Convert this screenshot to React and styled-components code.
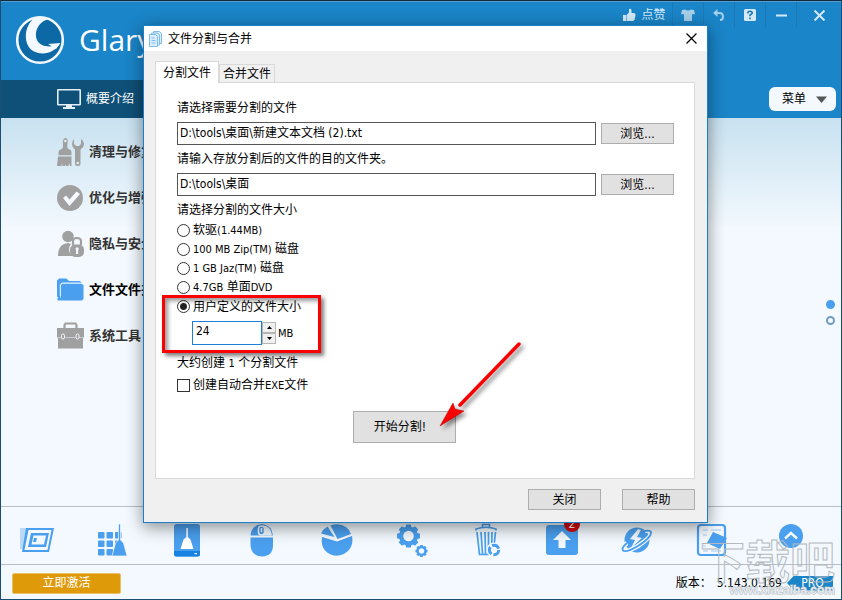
import { useState } from 'react'
import styled, { createGlobalStyle, css } from 'styled-components'

const GlobalStyle = createGlobalStyle`
  *, *::before, *::after {
    box-sizing: border-box;
  }

  body {
    margin: 0;
    color: #000;
    background: #f3f9fe;
    font-family: 'DejaVu Sans Condensed', 'Noto Sans CJK SC', sans-serif;
    font-size: 12px;
    line-height: 18px;
  }

  button, input {
    margin: 0;
    padding: 0;
    border: 0;
    color: inherit;
    font: inherit;
  }

  svg {
    display: block;
    flex: none;
  }
`

const Window = styled.div`
  position: relative;
  display: flex;
  flex-direction: column;
  min-height: 100vh;
  overflow: hidden;
  border: 1px solid #1c4e73;
  border-top-color: #0c2a40;
  background: #f3f9fe;
`

const Header = styled.header`
  display: flex;
  justify-content: space-between;
  align-items: flex-start;
  height: 79px;
  padding-left: 14px;
  background: #1a85c8;
  border-top: 1px solid #5a9dc8;
`

const Brand = styled.div`
  display: flex;
  align-items: center;
  gap: 14px;
  height: 76px;
  color: #fff;
  white-space: nowrap;
`

const BrandName = styled.span`
  font-family: 'Open Sans', 'Noto Sans', sans-serif;
  font-size: 30px;
  line-height: 40px;
`

const Controls = styled.div`
  display: flex;
  height: 26px;
  color: #d3e9f7;
`

const Control = styled.button`
  display: flex;
  align-items: center;
  justify-content: center;
  gap: 5px;
  width: ${props => props.$width || 31}px;
  background: none;
  border-right: 1px solid #1a78b5;

  &:last-child {
    border-right: 0;
  }
`

const NavBar = styled.nav`
  display: flex;
  justify-content: space-between;
  align-items: center;
  height: 38px;
  padding-right: 5px;
  background: #1a85c8;
`

const NavTab = styled.a`
  display: flex;
  align-items: center;
  gap: 4px;
  width: 50%;
  height: 38px;
  padding-left: 55px;
  color: #fff;
  background: #0f5078;
  text-decoration: none;
`

const MenuButton = styled.button`
  display: flex;
  align-items: center;
  justify-content: space-between;
  width: 67px;
  height: 24px;
  padding: 0 9px 0 13px;
  border-radius: 6px;
  background: #f3f9fe;
`

const Content = styled.main`
  display: flex;
  flex: 1;
  justify-content: space-between;
  align-items: flex-start;
  padding: 11px 6px 11px 55px;
  background: linear-gradient(#c8e1f0, #f3f9fe 110px);
`

const SideLink = styled.a`
  display: flex;
  align-items: center;
  gap: 5px;
  height: 46px;
  color: ${props => props.$active ? '#000' : '#333'};
  font-size: 13px;
  font-weight: 700;
  text-decoration: none;
  white-space: nowrap;
`

const Pager = styled.div`
  display: flex;
  flex-direction: column;
  gap: 7px;
  align-self: center;
`

const PageDot = styled.button`
  width: 9px;
  height: 9px;
  border: 2px solid ${props => props.$active ? '#4a9fee' : '#6f9cc0'};
  border-radius: 50%;
  background: ${props => props.$active ? '#4a9fee' : '#f3f9fe'};
`

const Toolbar = styled.div`
  display: flex;
  justify-content: space-between;
  align-items: center;
  height: 58px;
  padding: 0 38px 0 19px;
  border-top: 1px solid #b6bfc8;
`

const Tools = styled.div`
  display: flex;
  flex: 1;
  justify-content: space-between;
  margin-right: 50px;
  padding-top: 8px;
`

const ToolButton = styled.button`
  position: relative;
  display: flex;
  background: none;
`

const Badge = styled.span`
  position: absolute;
  top: -7px;
  right: -1px;
  width: 16px;
  height: 16px;
  border-radius: 50%;
  color: #fff;
  background: #d40b0b;
  line-height: 16px;
`

const Footer = styled.footer`
  display: flex;
  align-items: center;
  justify-content: space-between;
  height: 35px;
  padding: 2px 8px 0 11px;
  border-top: 1px solid #b6bfc8;
`

const ActivateButton = styled.button`
  width: 109px;
  height: 21px;
  border: 1px solid #eac068;
  border-radius: 2px;
  color: #fff;
  background: #df9a0a;
`

const Version = styled.div`
  display: flex;
  align-items: center;
  gap: 5px;
`

const Pro = styled.span`
  width: 46px;
  height: 15px;
  padding-left: 5px;
  color: #fff;
  background: #1a85c8;
  clip-path: polygon(0 50%, 7px 0, 100% 0, 100% 100%, 7px 100%);
  line-height: 15px;
  text-align: center;
`

const Watermark = styled.div`
  position: absolute;
  right: 6px;
  bottom: 2px;
  color: transparent;
  font-size: 45px;
  font-weight: 700;
  line-height: 52px;
  text-align: right;
  pointer-events: none;
  -webkit-text-stroke: 1px #b4babf;
`

const WatermarkUrl = styled.div`
  margin-top: -6px;
  color: #e6eaee;
  font-family: 'Liberation Sans', sans-serif;
  font-size: 12px;
  line-height: 13px;
  -webkit-text-stroke: 1px #b3b9bf;
  paint-order: stroke fill;
`

const DialogBox = styled.section`
  position: absolute;
  top: 24px;
  right: 133px;
  left: 142px;
  border: 1px solid #1a7fc8;
  background: #f0f0f0;
  box-shadow: 0 4px 16px rgba(0, 0, 0, .45);
`

const TitleBar = styled.header`
  display: flex;
  align-items: center;
  gap: 6px;
  height: 25px;
  padding-left: 5px;
  background: #fff;
`

const Title = styled.h1`
  flex: 1;
  margin: 0;
  font-size: 12px;
  font-weight: 400;
`

const CloseButton = styled.button`
  display: flex;
  align-items: center;
  justify-content: center;
  width: 31px;
  height: 25px;
  background: none;
`

const DialogBody = styled.div`
  padding: 10px 12px 0 11px;
`

const Tabs = styled.div`
  display: flex;
  align-items: flex-end;
`

const Tab = styled.button`
  height: 18px;
  padding: 0 3px;
  border: 1px solid #d9d9d9;
  border-bottom: 0;
  background: #f0f0f0;

  ${props => props.$active && css`
    z-index: 1;
    height: 22px;
    margin-bottom: -1px;
    padding: 0 7px;
    background: #fff;
  `}
`

const Panel = styled.form`
  padding: 16px 20px 35px 21px;
  border: 1px solid #d9d9d9;
  background: #fff;
`

const Label = styled.label`
  display: block;
`

const FileRow = styled.div`
  display: flex;
  align-items: center;
  gap: 5px;
  margin: 5px 0;
`

const PathInput = styled.input`
  flex: 1;
  min-width: 0;
  height: 23px;
  padding: 0 2px 4px;
  border: 1px solid #555;
  background: #fff;
`

const Button = styled.button`
  width: 73px;
  height: 21px;
  border: 1px solid #adadad;
  background: #e1e1e1;
`

const StartButton = styled(Button)`
  width: 103px;
  height: 32px;
  padding-right: 8px;
`

const Sizes = styled.fieldset`
  margin: 0;
  padding: 0;
  border: 0;
`

const Legend = styled.legend`
  padding: 0 0 2px;
`

const Option = styled.label`
  display: flex;
  align-items: center;
  gap: 3px;
  height: 19px;
`

const Radio = styled.input`
  appearance: none;
  width: 13px;
  height: 13px;
  border: 1px solid #333;
  border-radius: 50%;
  background: #fff;

  &:checked {
    background: radial-gradient(circle, #222 3px, #fff 4px);
  }
`

const Checkbox = styled.input`
  appearance: none;
  width: 13px;
  height: 13px;
  border: 1px solid #333;
  background: #fff;

  &:checked {
    background: #333;
  }
`

const Latin = styled.span`
  font-size: 11px;
`

const Custom = styled.div`
  position: relative;
`

const CustomSize = styled.div`
  display: flex;
  align-items: center;
  margin-top: 5px;
  padding-left: 15px;
`

const SizeInput = styled.input`
  appearance: textfield;
  width: 70px;
  height: 24px;
  padding: 0 3px 4px;
  border: 1px solid #1a7fd6;

  &::-webkit-inner-spin-button {
    appearance: none;
  }
`

const Spinner = styled.div`
  display: flex;
  flex-direction: column;
  margin-right: 2px;
`

const SpinButton = styled.button`
  display: flex;
  align-items: center;
  justify-content: center;
  width: 14px;
  height: 11px;
  border: 1px solid #b5b5b5;
  background: #f0f0f0;
`

const Highlight = styled.div`
  position: absolute;
  top: -2px;
  left: -15px;
  width: 159px;
  height: 58px;
  border: 3px solid #fb0000;
  box-shadow: 3px 3px 4px rgba(0, 0, 0, .5), inset 3px 3px 4px rgba(0, 0, 0, .4);
  pointer-events: none;
`

const Estimate = styled.p`
  margin: 9px 0 3px;
`

const StartRow = styled.div`
  position: relative;
  display: flex;
  justify-content: center;
  margin-top: 16px;
  padding-right: 43px;
`

const Arrow = styled.svg`
  position: absolute;
  bottom: 11px;
  left: 50%;
  margin-left: 11px;
  overflow: visible;
  filter: drop-shadow(3px 3px 2px rgba(0, 0, 0, .45));
  pointer-events: none;
`

const Actions = styled.footer`
  display: flex;
  justify-content: flex-end;
  gap: 21px;
  padding: 10px 0 12px;
`

const LogoIcon = () => (
  <svg width='50' height='50' viewBox='0 0 50 50'>
    <circle cx='25' cy='25' r='22.8' fill='#0d69a6' stroke='#f3f9fe' strokeWidth='2.6' />
    <path d='M20 2.500C8 11 8 31 19 36.500 29 41 40 37 44.500 29 36 33 26 32 22.500 26 18 17 24 6 34 4 29 2 24 2 20 2.500Z' fill='#f3f9fe' />
    <path d='M33 29 45.500 28 41 34Z' fill='#f3f9fe' />
  </svg>
)

const ThumbIcon = () => (
  <svg width='14' height='14' viewBox='0 0 14 14' fill='currentColor'>
    <path d='M1 7h3v6H1zM4.500 7 7 4.500V1q2.500-1 2.500 1.500V5H12q2 .5 1.500 2.500L12.500 12l-1.500 1H4.500z' />
  </svg>
)

const ShirtIcon = () => (
  <svg width='14' height='12' viewBox='0 0 14 12' fill='#a5cee9'>
    <path d='M1 1 4 .5q3 2 6 0l3 .5 1 4-3 .5V12H3V5.500L0 5z' />
  </svg>
)

const UndoIcon = () => (
  <svg width='12' height='12' viewBox='0 0 12 12' fill='none' stroke='#a5cee9' strokeWidth='2'>
    <path d='M2 4h4.500Q10 4 10 8q0 3-3 3' />
    <path d='M4.500 0 0 4l4.500 4z' fill='#a5cee9' stroke='none' />
  </svg>
)

const HelpIcon = () => (
  <svg width='12' height='12' viewBox='0 0 12 12'>
    <rect width='12' height='12' rx='1.500' fill='#d3e9f7' />
    <path d='M3.800 4.300Q4 2.300 6 2.300q2.200 0 2.200 1.800Q8.200 5.300 6 6v1.300M6 8.500v1.700' fill='none' stroke='#1673b0' strokeWidth='1.600' />
  </svg>
)

const CrossIcon = ({ size, width }) => (
  <svg width={size} height={size} viewBox='0 0 10 10' fill='none' stroke='currentColor' strokeWidth={width}>
    <path d='m.5.5 9 9m0-9-9 9' />
  </svg>
)

const MinusIcon = () => (
  <svg width='11' height='3' viewBox='0 0 11 3'>
    <rect y='.5' width='11' height='2' fill='#d3e9f7' />
  </svg>
)

const MonitorIcon = () => (
  <svg width='26' height='22' viewBox='0 0 26 22'>
    <rect x='1.800' y='1.800' width='22.400' height='15' rx='.5' fill='none' stroke='#e3eff7' strokeWidth='1.600' />
    <path d='M10 17h6v2h3v2H7v-2h3z' fill='#e3eff7' />
  </svg>
)

const TriangleIcon = () => (
  <svg width='11' height='7' viewBox='0 0 11 7'>
    <path d='M0 .5h11L5.500 7z' fill='#555' />
  </svg>
)

const SideIcon = ({ children, color = '#a0a0a0' }) => (
  <svg width='28' height='28' viewBox='0 0 28 28' fill={color}>{children}</svg>
)

const sideItems = [
  {
    name: '清理与修复',
    icon: (
      <SideIcon>
        <path d='M9.500 0q2 0 2.300 3l-.6 5.500q0 2.500 3 3.200 1.300.5 1.300 3v2.600h-13v-2.600q0-2.500 1.500-3 3-.7 3-3.200L6.900 3Q7.500 0 9.500 0Z' />
        <path d='M2 18.500h13.500V28H14l-1-3-.5 3H10l-.5-2-.5 2H6.500L6 25l-.5 3H1z' />
        <path d='M18 1v5l2 2h3l2-2V1q3 2 3 5t-3 5l-.5 1v13.500q0 2.500-2.800 2.500T19 25.500V12l-.5-1q-2.500-2-2.500-5t2-5Z' />
        <circle cx='9.400' cy='3' r='1.200' fill='#e5f1f8' />
        <circle cx='21.700' cy='25' r='1.200' fill='#e5f1f8' />
      </SideIcon>
    )
  },
  {
    name: '优化与增强',
    icon: (
      <SideIcon>
        <circle cx='14' cy='14' r='13' />
        <path d='m7 14 3-2.500 3.500 4 7-8 3.500 2.500L13.500 22z' fill='#f3f9fe' />
      </SideIcon>
    )
  },
  {
    name: '隐私与安全',
    icon: (
      <SideIcon>
        <circle cx='12' cy='6.500' r='5.800' />
        <path d='M2 26Q2 14 12 13l3 1q-2 2-2 5 0 5 4 7z' />
        <rect x='14' y='14.500' width='14' height='12.500' rx='5' />
        <path d='M17 15v-3.500Q17 8 21 8t4 3.500V15' fill='none' stroke='#a0a0a0' strokeWidth='2.200' />
        <path d='M19.500 19a1.600 1.600 0 1 1 2.600 1.200V24h-2v-3.800Z' fill='#f3f9fe' />
      </SideIcon>
    )
  },
  {
    name: '文件文件夹',
    active: true,
    icon: (
      <SideIcon color='#4a9fee'>
        <path d='M3 2.500h7.500L13 5h11l2 2H6L4.500 8.500v14H3l-2-2v-16Z' />
        <path d='M6.500 7.500H25l2.500 1.500v14L26 24.500H1.500V22h3.500V9Z' />
        <path d='M4.300 20V8.500L6 7h20' fill='none' stroke='#e6f3ff' />
      </SideIcon>
    )
  },
  {
    name: '系统工具',
    icon: (
      <SideIcon>
        <path d='M8.500 6V3l1-1.500h10l1 1.500v3' fill='none' stroke='#a0a0a0' strokeWidth='2.200' />
        <path d='M1 6h27v9.500H1zM2 16h25v10.500H2z' />
        <rect x='5.500' y='12' width='3' height='5' rx='1.500' stroke='#f3f9fe' />
        <rect x='20' y='12' width='3' height='5' rx='1.500' stroke='#f3f9fe' />
      </SideIcon>
    )
  }
]

const ToolIcon = ({ children }) => (
  <svg width='34' height='34' viewBox='0 0 34 34' fill='#4a9fee'>{children}</svg>
)

// gear outline built from a ring with square teeth
const Gear = ({ x, y, r }) => (
  <g transform={`translate(${x} ${y})`}>
    <circle r={r * .64} fill='none' stroke='#4a9fee' strokeWidth={r * .36} />
    {[0, 45, 90, 135, 180, 225, 270, 315].map(angle => (
      <path key={angle} transform={`rotate(${angle})`} d={`M${-r * .2} ${-r}H${r * .2}L${r * .28} ${-r * .7}H${-r * .28}Z`} />
    ))}
  </g>
)

const tools = [
  {
    name: '启动管理',
    icon: (
      <ToolIcon>
        <path d='M0 5h7L3 26H0z' opacity='.35' />
        <path d='M6 5h28L29 29H2z' />
        <path d='M8.500 7h23L27.500 27H4.500z' fill='#f3f9fe' />
        <path d='M11 10h18L26 24H8z' />
        <path d='M13.500 12.500h12.500l-2 9H11.500z' fill='#f3f9fe' />
        <path d='M14 15h3l-1 4h-3z' />
      </ToolIcon>
    )
  },
  {
    name: '注册表清理',
    icon: (
      <ToolIcon>
        {[9, 17.5, 26].map(y => [3, 11.5, 20].map(x => (
          <rect key={`${x}-${y}`} x={x} y={y} width='6.500' height='6.500' rx='1' />
        )))}
        <path d='M23.500 1h2v16l3 3 3.500 13H17l3.500-13 3-3z' stroke='#f3f9fe' strokeWidth='.7' />
      </ToolIcon>
    )
  },
  {
    name: '磁盘清理',
    icon: (
      <ToolIcon>
        <rect x='4' y='1' width='26' height='32.500' rx='2.500' />
        <path d='M4 28h26v3q0 2.500-2.500 2.500h-21Q4 33.500 4 31z' fill='#1683e3' />
        <path d='M16.300 5h1.600v9l2.600 2.500L23.500 26h-13l3-9.500 2.800-2.500z' fill='#fff' />
        <rect x='24.500' y='30' width='2.500' height='1.200' fill='#fff' />
      </ToolIcon>
    )
  },
  {
    name: '右键菜单',
    icon: (
      <ToolIcon>
        <path d='M5.500 13Q6 2 17 1q10 1 11 12v9q0 11-11 11.500Q6 33 5.500 22z' />
        <path d='M5 12.500h23v2H5z' fill='#f3f9fe' />
        <path d='M18 2.500Q26 3 27 12.500h-9z' fill='#f3f9fe' />
        <rect x='13.500' y='3' width='6' height='9' rx='3' stroke='#f3f9fe' strokeWidth='1.500' />
        <path d='M16.500 5v4' stroke='#f3f9fe' strokeWidth='1.500' />
      </ToolIcon>
    )
  },
  {
    name: '磁盘分析',
    icon: (
      <ToolIcon>
        <path d='m17 18.500 15-5.500q2 9-4 15-6 5.500-14 4.500Q0 29 2 14z' />
        <path d='M10.500 2.500Q19-.5 26 4q4 3 5 7l-13.500 5z' />
        <path d='m7.500 3.500 7 10.500L1 10.500q2-4.500 6.500-7Z' />
      </ToolIcon>
    )
  },
  {
    name: '优化设置',
    icon: (
      <ToolIcon>
        <Gear x={13.5} y={13} r={11.5} />
        <Gear x={26.5} y={28} r={6} />
      </ToolIcon>
    )
  },
  {
    name: '软件卸载',
    icon: (
      <ToolIcon>
        <path d='M12.500 4V1.500h7V4M6 7.500V6q10-3.500 20 0v1.500' fill='none' stroke='#4a9fee' strokeWidth='1.600' />
        <path d='m7 9 2.500 22.500H22M11 9l1.500 22M15 9l.5 22M18.500 9v22M22 9l-.5 22M25.500 9 24 23' fill='none' stroke='#4a9fee' strokeWidth='1.700' />
        <circle cx='24' cy='27' r='7.500' fill='#f3f9fe' />
        <circle cx='24' cy='27' r='4.700' fill='none' stroke='#4a9fee' strokeWidth='3' strokeDasharray='7.800 2' />
      </ToolIcon>
    )
  },
  {
    name: '软件更新',
    badge: 2,
    icon: (
      <ToolIcon>
        <rect x='1' y='2' width='32' height='30' rx='3' />
        <path d='m17 8 9 9h-5.500v8h-7v-8H8z' fill='#f3f9fe' />
      </ToolIcon>
    )
  },
  {
    name: '加速',
    icon: (
      <ToolIcon>
        <circle cx='17' cy='17' r='12.500' />
        <path d='M7 20Q1 25 3 27.500 6 30 18 23 32 14 31 9q-1-2-6-1' fill='none' stroke='#f3f9fe' strokeWidth='4.500' />
        <path d='M7 20Q1 25 3 27.500 6 30 18 23 32 14 31 9q-1-2-6-1' fill='none' stroke='#4a9fee' strokeWidth='1.800' />
        <path d='m18 6-8 10 5 1-4 8 11-10-5-1 4-7z' fill='#f3f9fe' />
      </ToolIcon>
    )
  },
  {
    name: '文件管理',
    icon: (
      <ToolIcon>
        <rect x='3' y='2' width='27' height='30' rx='3' fill='none' stroke='#4a9fee' strokeWidth='2.200' />
        <path d='M8 7h5M16 7h10M8 12h4M8 23h3M8 28h5M16 28h10' stroke='#9fcbf5' />
        <path d='m18 9 14 6-7 11-13-6z' />
      </ToolIcon>
    )
  }
]

const UpIcon = () => (
  <svg width='24' height='24' viewBox='0 0 24 24'>
    <circle cx='12' cy='12' r='12' fill='#4a9fee' />
    <path d='m6 14.500 6-5.500 6 5.500' fill='none' stroke='#f3f9fe' strokeWidth='2.400' />
  </svg>
)

const FilesIcon = () => (
  <svg width='13' height='16' viewBox='0 0 13 16' fill='#d9edfc' stroke='#7dbcec'>
    <path d='M4.500.5h6l2 2v10h-8z' />
    <path d='M2.500 2h6l2 2v10h-8z' />
    <path d='M.5 3.500h6l2 2v10h-8zM2.500 7h3M2.500 9.500h4M2.500 12h4' />
  </svg>
)

const SpinIcon = ({ down }) => (
  <svg width='5' height='3' viewBox='0 0 5 3'>
    <path d={down ? 'M0 0h5L2.500 3z' : 'M0 3h5L2.500 0z'} />
  </svg>
)

const sizes = [
  { id: 'floppy', label: <span>软驱<Latin>(1.44MB)</Latin></span> },
  { id: 'zip', label: <span><Latin>100 MB Zip(TM)</Latin> 磁盘</span> },
  { id: 'jaz', label: <span><Latin>1 GB Jaz(TM)</Latin> 磁盘</span> },
  { id: 'dvd', label: <span><Latin>4.7GB</Latin> 单面<Latin>DVD</Latin></span> }
]

const SplitDialog = () => {
  const [size, setSize] = useState('custom')
  const [amount, setAmount] = useState(24)

  return (
    <DialogBox role='dialog' aria-labelledby='dialog-title'>
      <TitleBar>
        <FilesIcon />
        <Title id='dialog-title'>文件分割与合并</Title>
        <CloseButton aria-label='关闭窗口'><CrossIcon size={11} width={1.1} /></CloseButton>
      </TitleBar>
      <DialogBody>
        <Tabs role='tablist'>
          <Tab role='tab' aria-selected='true' $active>分割文件</Tab>
          <Tab role='tab' aria-selected='false'>合并文件</Tab>
        </Tabs>
        <Panel>
          <Label htmlFor='source'>请选择需要分割的文件</Label>
          <FileRow>
            <PathInput id='source' defaultValue='D:\tools\桌面\新建文本文档 (2).txt' />
            <Button type='button'>浏览...</Button>
          </FileRow>
          <Label htmlFor='target'>请输入存放分割后的文件的目的文件夹。</Label>
          <FileRow>
            <PathInput id='target' defaultValue='D:\tools\桌面' />
            <Button type='button'>浏览...</Button>
          </FileRow>
          <Sizes>
            <Legend>请选择分割的文件大小</Legend>
            {sizes.map(({ id, label }) => (
              <Option key={id}>
                <Radio type='radio' name='size' checked={size === id} onChange={() => setSize(id)} />
                {label}
              </Option>
            ))}
            <Custom>
              <Option>
                <Radio type='radio' name='size' checked={size === 'custom'} onChange={() => setSize('custom')} />
                用户定义的文件大小
              </Option>
              <CustomSize>
                <SizeInput id='amount' type='number' value={amount} onChange={e => setAmount(Number(e.target.value))} />
                <Spinner>
                  <SpinButton type='button' aria-label='增加' onClick={() => setAmount(amount + 1)}><SpinIcon /></SpinButton>
                  <SpinButton type='button' aria-label='减少' onClick={() => setAmount(amount - 1)}><SpinIcon down /></SpinButton>
                </Spinner>
                <label htmlFor='amount'><Latin>MB</Latin></label>
              </CustomSize>
              <Highlight />
            </Custom>
          </Sizes>
          <Estimate>大约创建 <Latin>1</Latin> 个分割文件</Estimate>
          <Option>
            <Checkbox type='checkbox' />
            <span>创建自动合并<Latin>EXE</Latin>文件</span>
          </Option>
          <StartRow>
            <StartButton type='button'>开始分割!</StartButton>
            <Arrow width='84' height='90' viewBox='0 0 84 90'>
              <path d='M82 2 23 63' stroke='#fb0000' strokeWidth='3.500' strokeLinecap='round' />
              <path d='m3 84 13-23 2 6 4 1 5 1z' fill='#fb0000' stroke='#b00' strokeWidth='.5' />
            </Arrow>
          </StartRow>
        </Panel>
        <Actions>
          <Button>关闭</Button>
          <Button>帮助</Button>
        </Actions>
      </DialogBody>
    </DialogBox>
  )
}

const App = () => {
  return (
    <>
      <GlobalStyle />
      <Window>
        <Header>
          <Brand>
            <LogoIcon />
            <BrandName>Glary</BrandName>
          </Brand>
          <Controls>
            <Control $width={57}><ThumbIcon />点赞</Control>
            <Control aria-label='皮肤'><ShirtIcon /></Control>
            <Control aria-label='撤销'><UndoIcon /></Control>
            <Control aria-label='帮助'><HelpIcon /></Control>
            <Control aria-label='最小化'><MinusIcon /></Control>
            <Control aria-label='关闭' $width={44}><CrossIcon size={11} width={1.8} /></Control>
          </Controls>
        </Header>
        <NavBar>
          <NavTab href='#overview'><MonitorIcon />概要介绍</NavTab>
          <MenuButton>菜单<TriangleIcon /></MenuButton>
        </NavBar>
        <Content>
          <nav>
            {sideItems.map(({ name, active, icon }) => (
              <SideLink key={name} href={`#${name}`} $active={active}>{icon}{name}</SideLink>
            ))}
          </nav>
          <Pager>
            <PageDot aria-label='第一页' $active />
            <PageDot aria-label='第二页' />
          </Pager>
        </Content>
        <Toolbar>
          <Tools>
            {tools.map(({ name, badge, icon }) => (
              <ToolButton key={name} aria-label={name}>
                {icon}
                {badge && <Badge>{badge}</Badge>}
              </ToolButton>
            ))}
          </Tools>
          <ToolButton aria-label='展开'><UpIcon /></ToolButton>
        </Toolbar>
        <Footer>
          <ActivateButton>立即激活</ActivateButton>
          <Version>
            <span>版本：</span>
            <span>5.143.0.169</span>
            <Pro>PRO</Pro>
          </Version>
        </Footer>
        <Watermark>
          下载吧
          <WatermarkUrl>www.xiazaiba.com</WatermarkUrl>
        </Watermark>
        <SplitDialog />
      </Window>
    </>
  )
}

export default App
